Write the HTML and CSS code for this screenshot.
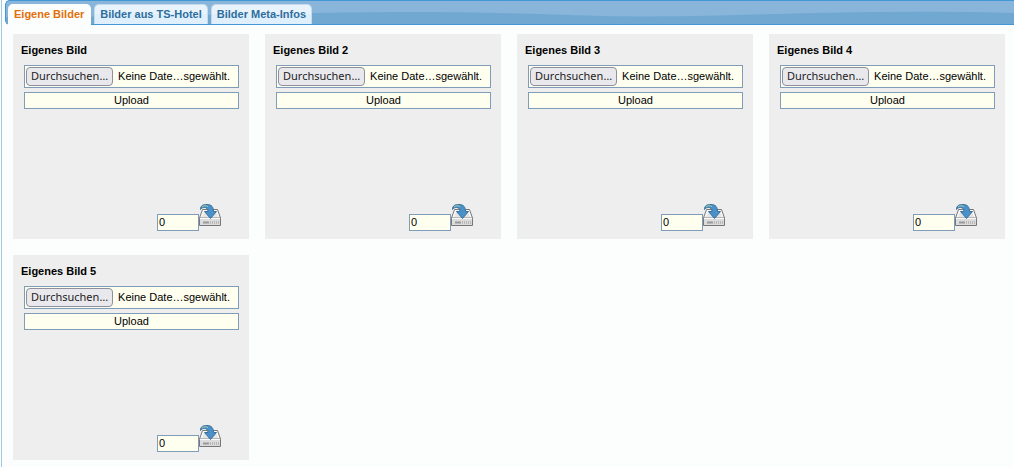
FILE: index.html
```
<!DOCTYPE html>
<html lang="de">
<head>
    <meta charset="UTF-8">
    <title>Eigene Bilder</title>
    <link rel="stylesheet" href="styles.css">
</head>
<body>
    <svg class="symbols" aria-hidden="true">
        <symbol id="save-icon" viewBox="0 0 24 24">
            <path d="M4.500 6.500h15l3 8.500H1.500z" fill="#f8f8f8" stroke="#777" />
            <path d="M4 14l2-5h12l2 5z" fill="#e6e6e6" />
            <path d="M1.500 15.500h21v7h-21z" fill="#dcdcdc" stroke="#777" />
            <path d="M2 15.500h20" stroke="#fafafa" />
            <path d="M5 19.500h6" stroke="#999" stroke-width="2" />
            <path d="M12.500 18v3M14.500 18v3M16.500 18v3M18.500 18v3M20.500 18v3" stroke="#b8b8b8" />
            <path d="M2.500 6.500C2.500 2.500 5 1.500 9 1.500C13.500 1.500 15.500 4 15.500 8.500H18.500L12.500 15.500L6.500 8.500H10C10 5.500 8.500 4.500 6.500 4.500C4.500 4.500 3.500 5 2.500 6.500z" fill="#4a90c9" stroke="#3a719c" />
            <path d="M4 4C5.500 2.500 8 2.500 10 3.500" fill="none" stroke="#a8cfa8" />
        </symbol>
    </svg>

    <div class="tabs">
        <nav class="tab-bar">
            <svg class="wave" viewBox="0 0 1009 23" preserveAspectRatio="none" aria-hidden="true">
                <path d="M0 16C140 16 220 13 310 12C420 10 480 11 595 15C700 17 760 12 870 11Q950 10 1009 12V23H0z" />
            </svg>
            <a href="#bilder" class="tab active">Eigene Bilder</a>
            <a href="#hotel" class="tab">Bilder aus TS-Hotel</a>
            <a href="#meta" class="tab">Bilder Meta-Infos</a>
        </nav>

        <div class="images" id="bilder">
            <form class="image-box">
                <h2>Eigenes Bild</h2>
                <label class="file-field">
                    <input type="file" class="file-input">
                    <span class="browse">Durchsuchen…</span>
                    <span>Keine Date…sgewählt.</span>
                </label>
                <button type="button" class="upload">Upload</button>
                <div class="order">
                    <input type="text" class="order-input" value="0" aria-label="Reihenfolge">
                    <button type="button" class="save" aria-label="Speichern"><svg><use href="#save-icon" /></svg></button>
                </div>
            </form>
            <form class="image-box">
                <h2>Eigenes Bild 2</h2>
                <label class="file-field">
                    <input type="file" class="file-input">
                    <span class="browse">Durchsuchen…</span>
                    <span>Keine Date…sgewählt.</span>
                </label>
                <button type="button" class="upload">Upload</button>
                <div class="order">
                    <input type="text" class="order-input" value="0" aria-label="Reihenfolge">
                    <button type="button" class="save" aria-label="Speichern"><svg><use href="#save-icon" /></svg></button>
                </div>
            </form>
            <form class="image-box">
                <h2>Eigenes Bild 3</h2>
                <label class="file-field">
                    <input type="file" class="file-input">
                    <span class="browse">Durchsuchen…</span>
                    <span>Keine Date…sgewählt.</span>
                </label>
                <button type="button" class="upload">Upload</button>
                <div class="order">
                    <input type="text" class="order-input" value="0" aria-label="Reihenfolge">
                    <button type="button" class="save" aria-label="Speichern"><svg><use href="#save-icon" /></svg></button>
                </div>
            </form>
            <form class="image-box">
                <h2>Eigenes Bild 4</h2>
                <label class="file-field">
                    <input type="file" class="file-input">
                    <span class="browse">Durchsuchen…</span>
                    <span>Keine Date…sgewählt.</span>
                </label>
                <button type="button" class="upload">Upload</button>
                <div class="order">
                    <input type="text" class="order-input" value="0" aria-label="Reihenfolge">
                    <button type="button" class="save" aria-label="Speichern"><svg><use href="#save-icon" /></svg></button>
                </div>
            </form>
            <form class="image-box">
                <h2>Eigenes Bild 5</h2>
                <label class="file-field">
                    <input type="file" class="file-input">
                    <span class="browse">Durchsuchen…</span>
                    <span>Keine Date…sgewählt.</span>
                </label>
                <button type="button" class="upload">Upload</button>
                <div class="order">
                    <input type="text" class="order-input" value="0" aria-label="Reihenfolge">
                    <button type="button" class="save" aria-label="Speichern"><svg><use href="#save-icon" /></svg></button>
                </div>
            </form>
        </div>
    </div>
</body>
</html>
```
FILE: styles.css
```
* {
    box-sizing: border-box;
}

body {
    margin: 0;
    background-color: #fcfdfd;
    color: #000;
    font-family: "Liberation Sans", Arial, sans-serif;
    font-size: 11px;
}

.symbols {
    display: none;
}

.tabs {
    min-height: 100vh;
    margin-left: 1px;
    padding-left: 3px;
    border-left: 1px solid #a6c9e2;
}

.tab-bar {
    position: relative;
    display: flex;
    align-items: flex-end;
    gap: 3px;
    height: 25px;
    padding-left: 2px;
    background-color: #89b5da;
    border: 1px solid #4297d7;
    border-right: none;
    border-radius: 5px 0 0 5px;
}

.wave {
    position: absolute;
    top: 0;
    left: 0;
    width: 100%;
    height: 100%;
    fill: #70a8d2;
}

.tab {
    position: relative;
    height: 20px;
    padding: 0 5px;
    background: linear-gradient(#e9f3fc 50%, #dfeffc 50%);
    border: 1px solid #c5dbec;
    border-bottom: none;
    border-radius: 5px 5px 0 0;
    color: #2e6e9e;
    font-weight: bold;
    line-height: 18px;
    text-decoration: none;
}

.tab.active {
    height: 21px;
    margin-bottom: -1px;
    padding-right: 6px;
    background: #fcfdfd;
    border-color: #fcfdfd;
    color: #e17009;
}

.images {
    display: grid;
    grid-template-columns: repeat(auto-fill, 236px);
    gap: 16px;
    padding: 9px 8px 7px;
}

.image-box {
    display: flex;
    flex-direction: column;
    min-height: 205px;
    padding: 8px 10px 8px 11px;
    background-color: #eee;
}

.image-box h2 {
    margin: 0 0 7px -3px;
    font-size: 11px;
    line-height: 16px;
}

.file-field {
    display: flex;
    align-items: center;
    gap: 5px;
    height: 23px;
    padding: 1px;
    background-color: #fffff0;
    border: 1px solid #7f9db9;
    line-height: 16px;
    white-space: nowrap;
}

.file-field span {
    padding-bottom: 1px;
}

.file-field .browse {
    padding: 0 4px 1px;
    background-color: #e9e9ed;
    border: 1px solid #8f8f9d;
    border-radius: 4px;
    color: #222;
    font-family: "Noto Sans", sans-serif;
}

.file-input {
    position: absolute;
    width: 1px;
    height: 1px;
    opacity: 0;
}

.upload {
    height: 17px;
    margin-top: 4px;
    padding: 0 0 2px;
    background-color: #fffff0;
    border: 1px solid #7f9db9;
    font: inherit;
}

.order {
    display: flex;
    justify-content: flex-end;
    align-items: flex-end;
    margin-top: auto;
    padding-right: 17px;
}

.order-input {
    width: 42px;
    height: 17px;
    padding: 0 1px 1px;
    background-color: #fffff0;
    border: 1px solid #7f9db9;
    font: inherit;
}

.save {
    margin-left: -1px;
    padding: 0 0 4px;
    background: none;
    border: none;
    cursor: pointer;
}

.save svg {
    display: block;
    width: 24px;
    height: 24px;
}
```
